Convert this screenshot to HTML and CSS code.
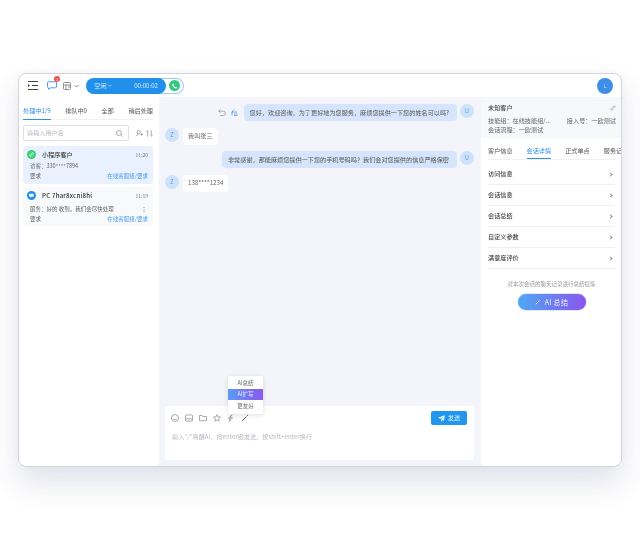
FILE: index.html
```html
<!DOCTYPE html>
<html>
  <head>
    <meta charset='utf-8' />
    <title>Workbench</title>
    <link rel="stylesheet" href="styles.css">
  </head>
  <body>
    <div class='window'>
      <header class='topbar'>
        <svg class='ico-menu' width='10' height='9' viewBox='0 0 10 9' fill='none' stroke='#444' stroke-width='1'><path d='M0 .5h10M4 4.500h6M0 8.500h10'/><path d='M0 3l2 1.500-2 1.500z' fill='#444' stroke='none'/></svg>
        <span class='chat-ico'>
          <svg width='10' height='9' viewBox='0 0 10 9' fill='none' stroke='#4a9cf0' stroke-width='1'><path d='M1.500.8h7a1 1 0 0 1 1 1v4a1 1 0 0 1-1 1h-5l-2 1.500v-1.500h0a1 1 0 0 1-1-1v-4a1 1 0 0 1 1-1z'/></svg>
          <span class='badge'>1</span>
        </span>
        <svg class='ico-grid' width='8' height='8' viewBox='0 0 8 8' fill='none' stroke='#777' stroke-width='.8'><rect x='.5' y='.5' width='7' height='7' rx='1'/><path d='M.5 3h7M3 3v4.500M5 5h2'/></svg>
        <svg class='ico-caret' width='5' height='4' viewBox='0 0 5 4' fill='none' stroke='#777' stroke-width='.8'><path d='M.5 1l2 2 2-2'/></svg>
        <div class='status'>
          <div class='status-main'>
            <span>空闲 <svg width='4' height='3' viewBox='0 0 5 4' fill='none' stroke='#d5e9fd' stroke-width='.8'><path d='M.5 1l2 2 2-2'/></svg></span>
            <span>00:00:02</span>
          </div>
          <span class='status-phone'>
            <svg width='6' height='6' viewBox='0 0 10 10' fill='#fff'><path d='M2 .8l1.500 2.200-.9 1.100c.6 1.300 1.500 2.200 2.900 2.900l1.100-.9 2.200 1.500c-.3 1.100-1.100 1.700-2.100 1.600C3.500 8.800 1.200 6.500.5 3 .4 2 1 1.100 2 .8z'/></svg>
          </span>
        </div>
        <span class='user-avatar'>L</span>
      </header>

      <div class='columns'>
        <aside class='left'>
          <nav class='left-tabs'>
            <span class='tab-on'>处理中1/9</span>
            <span>排队中0</span>
            <span>全部</span>
            <span>稍后处理</span>
          </nav>
          <div class='search-row'>
            <div class='search'>
              <span>请输入用户名</span>
              <svg width='7' height='7' viewBox='0 0 8 8' fill='none' stroke='#888' stroke-width='.8'><circle cx='3.400' cy='3.400' r='2.800'/><path d='M5.500 5.500L7.600 7.600'/></svg>
            </div>
            <svg width='7' height='7' viewBox='0 0 8 8' fill='none' stroke='#888' stroke-width='.8'><circle cx='3' cy='2.500' r='1.800'/><path d='M.5 7c.3-1.800 1.300-2.600 2.500-2.600M5 5h3M6.500 3.500v3'/></svg>
            <svg width='7' height='7' viewBox='0 0 8 8' fill='none' stroke='#888' stroke-width='.8'><path d='M2 7.500V.8L.5 2.300M6 .5v6.700l1.500-1.500'/></svg>
          </div>

          <div class='card card-on'>
            <div class='card-top'>
              <span class='card-ico ico-green'><svg width='5' height='5' viewBox='0 0 8 8' fill='none' stroke='#fff' stroke-width='1.200'><path d='M3 5l2-2M2.500 3.500L1.500 4.500a1.400 1.400 0 0 0 2 2l1-1M5.500 4.500l1-1a1.400 1.400 0 0 0-2-2l-1 1'/></svg></span>
              <span class='card-name'>小程序客户</span>
              <span class='card-time'>11:20</span>
            </div>
            <div class='card-msg'><span>访客：330****7894</span></div>
            <div class='card-foot'><span>要求</span><span class='card-link'>在线客服组/要求</span></div>
          </div>

          <div class='card'>
            <div class='card-top'>
              <span class='card-ico ico-blue'><svg width='5' height='5' viewBox='0 0 8 8' fill='#fff'><path d='M1.500 1h5a1 1 0 0 1 1 1v3a1 1 0 0 1-1 1h-3L2 7.500V6h-.5a1 1 0 0 1-1-1V2a1 1 0 0 1 1-1z'/></svg></span>
              <span class='card-name name-latin'>PC 7har8xcni8hi</span>
              <span class='card-time'>11:19</span>
            </div>
            <div class='card-msg msg-gap'><span>服务：好的 收到。我们会尽快处理</span><span class='dots'>⋮</span></div>
            <div class='card-foot'><span>要求</span><span class='card-link'>在线客服组/要求</span></div>
          </div>
        </aside>

        <main class='chat'>
          <div class='messages'>
            <div class='msg msg-out'>
              <svg class='msg-tool' width='8' height='7' viewBox='0 0 8 7' fill='none' stroke='#999' stroke-width='.8'><path d='M2.500.5L.8 2.200l1.700 1.600M.8 2.200h4.400a2 2 0 0 1 0 4.300H2'/></svg>
              <svg class='msg-tool tool-quote' width='7' height='7' viewBox='0 0 7 7' fill='none' stroke='#4a9cf0' stroke-width='.8'><path d='M3 .5L1 3h5M1 3v3.500M3 5h3.500M3 6.500h3.500'/></svg>
              <div class='bubble bubble-out'>您好，欢迎咨询，为了更好地为您服务，麻烦您提供一下您的姓名可以吗?</div>
              <span class='avatar'>U</span>
            </div>
            <div class='msg'>
              <span class='avatar'>Z</span>
              <div class='bubble'>我叫张三</div>
            </div>
            <div class='msg msg-out'>
              <div class='bubble bubble-out'>非常感谢，那能麻烦您提供一下您的手机号码吗？我们会对您提供的信息严格保密</div>
              <span class='avatar'>U</span>
            </div>
            <div class='msg'>
              <span class='avatar'>Z</span>
              <div class='bubble'>138****1234</div>
            </div>
          </div>

          <div class='composer'>
            <div class='popup'>
              <div class='popup-item'>AI总结</div>
              <div class='popup-item popup-on'>AI扩写</div>
              <div class='popup-item'>更友好</div>
            </div>
            <div class='composer-top'>
              <div class='tools'>
                <svg width='8' height='8' viewBox='0 0 8 8' fill='none' stroke='#888' stroke-width='.7'><circle cx='4' cy='4' r='3.500'/><path d='M2.300 4.800c.8 1 2.600 1 3.400 0M2.800 3h.1M5.100 3h.1'/></svg>
                <svg width='8' height='8' viewBox='0 0 8 8' fill='none' stroke='#888' stroke-width='.7'><rect x='.5' y='1' width='7' height='6' rx='.6'/><path d='M.5 6l2-2 1.500 1.500L5.500 4l2 2'/></svg>
                <svg width='8' height='8' viewBox='0 0 8 8' fill='none' stroke='#888' stroke-width='.7'><path d='M.5 1.500h2.500l.8 1h3.700v4.200H.5z'/></svg>
                <svg width='8' height='8' viewBox='0 0 8 8' fill='none' stroke='#888' stroke-width='.7'><path d='M4 .6l1 2.300 2.500.2-1.900 1.600.6 2.500L4 5.900 1.800 7.200l.6-2.500L.5 3.100 3 2.900z'/></svg>
                <svg width='8' height='8' viewBox='0 0 8 8' fill='none' stroke='#888' stroke-width='.7'><path d='M5 .5L3 3.500h2.500L2.500 7.500l.7-3H1.500z'/></svg>
                <svg width='8' height='8' viewBox='0 0 8 8' fill='none' stroke='#666' stroke-width='1'><path d='M1 7l4.500-4.500M6 1l1 1'/></svg>
              </div>
              <button class='send'>
                <svg width='7' height='7' viewBox='0 0 8 8' fill='#fff'><path d='M7.800.2L.2 3.200l2.500 1.100 3.300-2.300-2.300 3 .1 2.800 1.600-2 1.300.6z'/></svg>
                发送
              </button>
            </div>
            <div class='placeholder'>输入"/"唤醒AI、按enter键发送、按shift+enter换行</div>
          </div>
        </main>

        <aside class='right'>
          <section class='info'>
            <div class='info-head'>
              <span class='info-title'>未知客户</span>
              <svg width='6' height='6' viewBox='0 0 8 8' fill='none' stroke='#999' stroke-width='.9'><path d='M3 5l2-2M2.500 3.500L1.500 4.500a1.400 1.400 0 0 0 2 2l1-1M5.500 4.500l1-1a1.400 1.400 0 0 0-2-2l-1 1'/></svg>
            </div>
            <div class='info-line'><span>技能组：在线技能组/...</span><span>接入号：一欧测试</span></div>
            <div class='info-line'><span>会话流程：一欧测试</span></div>
          </section>
          <div class='right-body'>
            <nav class='right-tabs'>
              <span>客户信息</span>
              <span class='tab-on'>会话详情</span>
              <span>正式单点</span>
              <span>服务记录</span>
            </nav>
            <div class='rows'>
              <div class='row'><span>访问信息</span><i class='chev'></i></div>
              <div class='row'><span>会话信息</span><i class='chev'></i></div>
              <div class='row'><span>会话总结</span><i class='chev'></i></div>
              <div class='row'><span>自定义参数</span><i class='chev'></i></div>
              <div class='row'><span>满意度评价</span><i class='chev'></i></div>
            </div>
            <p class='hint'>对本次会话的聊天记录进行总结提炼</p>
            <button class='ai-btn'>
              <svg width='6' height='6' viewBox='0 0 8 8' fill='none' stroke='#fff' stroke-width='1.200'><path d='M1 7l4.500-4.500M6.200 1.200l.7.700'/></svg>
              AI 总结
            </button>
          </div>
        </aside>
      </div>
    </div>
  </body>
</html>
```

FILE: styles.css
```css
* {
  box-sizing: border-box;
}
html, body {
  margin: 0;
  padding: 0;
  height: 540px;
  background: #fff;
  overflow: hidden;
}
body {
  padding: 73px 18px 0;
  font-family: "Noto Sans CJK SC", "Noto Sans", sans-serif;
  font-size: 6.150px;
  line-height: 8px;
  color: #555;
}
svg {
  display: block;
  flex-shrink: 0;
}
.window {
  width: 604px;
  height: 394px;
  border: 1px solid #d4d5da;
  border-radius: 8px;
  background: #fff;
  box-shadow: 0 16px 30px rgba(50, 60, 120, 0.14), 0 0 12px rgba(50, 60, 120, 0.04);
  display: flex;
  flex-direction: column;
  overflow: hidden;
  filter: blur(0.3px);
}

/* top bar */
.topbar {
  height: 23px;
  flex-shrink: 0;
  display: flex;
  align-items: center;
  padding: 0 8px 0 9px;
}
.chat-ico {
  position: relative;
  margin-left: 9px;
}
.badge {
  position: absolute;
  top: -5px;
  right: -3px;
  width: 6px;
  height: 6px;
  border-radius: 50%;
  background: #f05050;
  color: #fff;
  font-size: 4px;
  line-height: 6px;
  text-align: center;
}
.ico-grid {
  margin-left: 6px;
}
.ico-caret {
  margin-left: 3px;
}
.status {
  margin-left: 7px;
  width: 98px;
  height: 16px;
  border: 1px solid #9cc9f5;
  border-left: none;
  border-radius: 8px;
  display: flex;
  align-items: center;
  justify-content: flex-start;
}
.status-main {
  width: 80px;
  height: 16px;
  margin-top: -1px;
  margin-bottom: -1px;
  border-radius: 8px;
  background: #2190ea;
  color: #d5e9fd;
  display: flex;
  align-items: center;
  justify-content: space-between;
  padding: 0 8px;
}
.status-main span:first-child {
  display: flex;
  align-items: center;
  gap: 2px;
}
.status-phone {
  width: 11px;
  height: 11px;
  margin-left: 3px;
  border-radius: 50%;
  background: #35c880;
  display: flex;
  align-items: center;
  justify-content: center;
}
.user-avatar {
  margin-left: auto;
  width: 16px;
  height: 16px;
  border-radius: 50%;
  background: #3d8fe8;
  color: #cfe4fb;
  font-size: 5px;
  line-height: 16px;
  text-align: center;
}

.columns {
  flex: 1;
  display: grid;
  grid-template-columns: 140px 322px 140px;
  min-height: 0;
}

/* left list */
.left {
  padding: 0 6px 0 4px;
}
.left-tabs {
  height: 23px;
  margin-bottom: 5px;
  display: flex;
  justify-content: space-between;
  border-bottom: 1px solid #eef0f3;
  color: #555;
}
.left-tabs span {
  height: 23px;
  margin-bottom: -1px;
  line-height: 28px;
}
.tab-on {
  color: #2f8fe8;
  border-bottom: 1px solid #2f8fe8;
}
.search-row {
  display: flex;
  align-items: center;
  gap: 3px;
  margin-bottom: 5px;
}
.search {
  width: 106px;
  height: 16px;
  margin-right: 4px;
  border: 1px solid #dcdfe4;
  border-radius: 2px;
  display: flex;
  align-items: center;
  justify-content: space-between;
  padding: 0 5px 0 3px;
  color: #b4b7bd;
}
.card {
  height: 39px;
  margin-bottom: 2px;
  padding: 4px 5px 0 7px;
  border-radius: 4px;
  background: #f8f9fb;
}
.card-on {
  height: 38px;
  margin-bottom: 3px;
  background: #e8f1fd;
}
.card-top {
  display: flex;
  align-items: center;
  margin-left: -3px;
  height: 9px;
}
.card-ico {
  width: 9px;
  height: 9px;
  border-radius: 50%;
  margin-right: 6px;
  display: flex;
  align-items: center;
  justify-content: center;
}
.ico-green {
  background: #3ccf7c;
}
.ico-blue {
  background: #2190ea;
}
.card-name {
  color: #333;
  font-weight: 500;
}
.name-latin {
  letter-spacing: 0.2px;
}
.card-time {
  margin-left: auto;
  color: #777;
  font-size: 5px;
}
.card-msg {
  margin-top: 3px;
  display: flex;
  justify-content: space-between;
  color: #666;
  font-size: 5.500px;
}
.msg-gap {
  margin-top: 5px;
}
.dots {
  margin-right: 1px;
}
.card-foot {
  margin-top: 2px;
  display: flex;
  justify-content: space-between;
  font-size: 5.500px;
  color: #666;
}
.card-link {
  color: #4a9cf0;
}

/* chat */
.chat {
  background: #f3f5fa;
  padding: 7px 7px 6px 6px;
  display: flex;
  flex-direction: column;
  justify-content: space-between;
}
.messages {
  display: flex;
  flex-direction: column;
  gap: 6.500px;
}
.msg {
  display: flex;
  align-items: flex-start;
  gap: 4px;
}
.msg-out {
  justify-content: flex-end;
  gap: 3px;
}
.msg-tool {
  margin-top: 5px;
  margin-right: 2px;
}
.tool-quote {
  margin-right: 3px;
}
.avatar {
  width: 14px;
  height: 14px;
  border-radius: 50%;
  background: #cfe2fb;
  color: #4a9cf0;
  font-size: 5.500px;
  line-height: 14px;
  text-align: center;
}
.bubble {
  height: 17px;
  padding: 4.500px 5px;
  border-radius: 4px;
  background: #fff;
  color: #666;
}
.bubble-out {
  padding: 4.500px 8px 4.500px 6px;
  background: #d6e5fb;
  color: #555;
}

/* composer */
.composer {
  position: relative;
  height: 54px;
  border-radius: 3px;
  background: #fff;
  padding: 5px 7px 0;
}
.composer-top {
  display: flex;
  align-items: center;
  justify-content: space-between;
}
.tools {
  display: flex;
  gap: 6px;
  margin-left: -1px;
}
.send {
  width: 36px;
  height: 14px;
  border: none;
  border-radius: 2px;
  background: #2196ee;
  color: #e2f1fd;
  font: inherit;
  display: flex;
  align-items: center;
  justify-content: center;
  gap: 3px;
  padding: 0;
}
.placeholder {
  margin-top: 8px;
  color: #b9bcc2;
}
.popup {
  position: absolute;
  left: 63px;
  top: -30px;
  width: 35px;
  height: 38px;
  background: #fff;
  border-radius: 2px;
  box-shadow: 0 1px 5px rgba(40, 50, 80, 0.16);
  padding-top: 1px;
  text-align: center;
  font-size: 5.500px;
  color: #666;
}
.popup-item {
  height: 12px;
  line-height: 12px;
}
.popup-on {
  height: 11px;
  line-height: 11px;
  background: linear-gradient(90deg, #5b9cf5, #8b58ee);
  color: #e8e8fb;
}

/* right panel */
.info {
  height: 41px;
  background: #f6f8fa;
  padding: 7px 5px 0 7px;
}
.info-head {
  display: flex;
  justify-content: space-between;
  align-items: center;
  height: 8px;
  margin-bottom: 5px;
  color: #444;
  font-weight: 500;
}
.info-line {
  display: flex;
  justify-content: space-between;
  height: 9px;
  color: #666;
}
.right-body {
  padding: 0 6px 0 7px;
  overflow: hidden;
}
.right-tabs {
  height: 22px;
  width: 127px;
  display: flex;
  gap: 14px;
  white-space: nowrap;
  color: #555;
  border-bottom: 1px solid #eef0f3;
}
.right-tabs span {
  flex-shrink: 0;
  height: 21px;
  line-height: 25px;
}
.rows {
  margin-top: 4px;
}
.row {
  height: 21px;
  display: flex;
  align-items: center;
  justify-content: space-between;
  border-bottom: 1px solid #eef0f3;
  color: #444;
  font-weight: 500;
}
.chev {
  width: 3px;
  height: 3px;
  margin-right: 3px;
  border-top: 0.8px solid #888;
  border-right: 0.8px solid #888;
  transform: rotate(45deg);
}
.hint {
  margin: 11px 0 5px;
  text-align: center;
  font-size: 5.500px;
  color: #999;
}
.ai-btn {
  display: flex;
  align-items: center;
  justify-content: center;
  gap: 4px;
  width: 70px;
  height: 18px;
  margin: 0 auto;
  border: 1px solid #e2e8fb;
  border-radius: 9px;
  background: linear-gradient(90deg, #4fa8f5, #8b55ee);
  color: #f2f2fe;
  font: inherit;
  font-size: 7px;
  letter-spacing: 0.3px;
  padding: 0;
}
```
